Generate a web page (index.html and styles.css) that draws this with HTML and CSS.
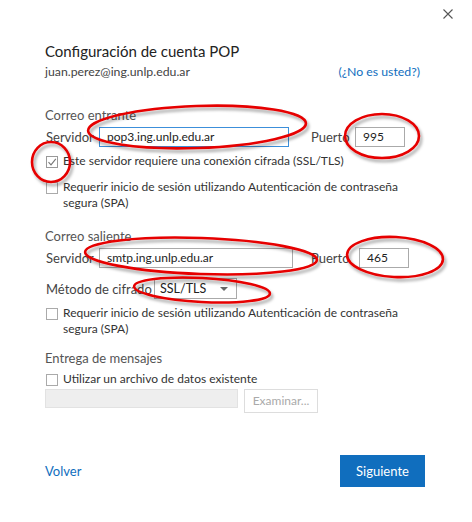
FILE: index.html
```html
<!DOCTYPE html>
<html lang="es">
<head>
<meta charset="utf-8">
<title>Configuración de cuenta POP</title>
<link rel="stylesheet" href="styles.css">
</head>
<body>
<div class="dialog">
  <div class="topbar">
    <span class="close" aria-label="Cerrar">
      <svg width="10" height="10" viewBox="0 0 10 10"><path d="M0.5 0.5 L9.5 9.5 M9.5 0.5 L0.5 9.5" stroke="#555" stroke-width="1.1" fill="none"/></svg>
    </span>
  </div>
  <div class="content">
    <h1 class="title">Configuración de cuenta POP</h1>
    <div class="account">
      <span class="email">juan.perez@ing.unlp.edu.ar</span>
      <a class="link">(¿No es usted?)</a>
    </div>

    <section class="group incoming">
      <div class="group-title">Correo entrante</div>
      <div class="field-row">
        <span class="lbl server-lbl">Servidor</span>
        <span class="input server focused">pop3.ing.unlp.edu.ar</span>
        <span class="lbl port-lbl">Puerto</span>
        <span class="input port">995</span>
      </div>
      <div class="check first">
        <span class="box checked"><svg width="10" height="10" viewBox="0 0 10 10"><path d="M1.5 5.2 L4 7.8 L8.8 1.8" stroke="#777" stroke-width="1.1" fill="none"/></svg></span>
        <span class="check-text">Este servidor requiere una conexión cifrada (SSL/TLS)</span>
      </div>
      <div class="check second">
        <span class="box"></span>
        <span class="check-text">Requerir inicio de sesión utilizando Autenticación de contraseña segura (SPA)</span>
      </div>
    </section>

    <section class="group outgoing">
      <div class="group-title">Correo saliente</div>
      <div class="field-row">
        <span class="lbl server-lbl">Servidor</span>
        <span class="input server wide">smtp.ing.unlp.edu.ar</span>
        <span class="lbl port-lbl">Puerto</span>
        <span class="input port">465</span>
      </div>
      <div class="field-row method">
        <span class="lbl method-lbl">Método de cifrado</span>
        <span class="select">SSL/TLS<svg class="caret" width="8" height="4" viewBox="0 0 8 4"><path d="M0 0 H8 L4 4 Z" fill="#666"/></svg></span>
      </div>
      <div class="check first">
        <span class="box"></span>
        <span class="check-text">Requerir inicio de sesión utilizando Autenticación de contraseña segura (SPA)</span>
      </div>
    </section>

    <section class="group delivery">
      <div class="group-title">Entrega de mensajes</div>
      <div class="check single">
        <span class="box"></span>
        <span class="check-text">Utilizar un archivo de datos existente</span>
      </div>
      <div class="file-row">
        <span class="input disabled"></span>
        <span class="btn-disabled">Examinar...</span>
      </div>
    </section>
  </div>
  <div class="footer">
    <a class="link back">Volver</a>
    <span class="primary">Siguiente</span>
  </div>

  <svg class="annotations" width="472" height="522" viewBox="0 0 472 522">
    <defs>
      <filter id="shadow" x="-20%" y="-40%" width="140%" height="180%">
        <feDropShadow dx="2" dy="3" stdDeviation="1.6" flood-color="#000" flood-opacity="0.35"/>
      </filter>
    </defs>
    <g fill="none" stroke="#e60000" stroke-width="2.6" filter="url(#shadow)">
      <ellipse cx="197" cy="127" rx="109" ry="21" transform="rotate(-2 197 127)"/>
      <ellipse cx="382" cy="136" rx="37" ry="22"/>
      <ellipse cx="51" cy="162" rx="19" ry="20"/>
      <ellipse cx="201" cy="256" rx="116" ry="18" transform="rotate(2 201 256)"/>
      <ellipse cx="395" cy="257" rx="48" ry="20" transform="rotate(3 395 257)"/>
      <ellipse cx="202" cy="290" rx="68" ry="12" transform="rotate(3 202 290)"/>
    </g>
  </svg>
</div>
</body>
</html>
```
FILE: styles.css
```css
* { box-sizing: border-box; }
html, body { margin: 0; padding: 0; background: #fff; }
body {
  font-family: Lato, "Open Sans", "Noto Sans", sans-serif;
  font-size: 13px;
  color: #333;
}
.dialog {
  position: relative;
  width: 472px;
  height: 522px;
  overflow: hidden;
  background: #fff;
}
.topbar {
  display: flex;
  justify-content: flex-end;
  padding: 9px 19px 0 0;
  height: 30px;
}
.close { display: block; width: 10px; height: 10px; }
.close svg { display: block; }

.content { padding: 0 47px 0 45px; }
.title {
  margin: 10px 0 0;
  font-size: 15px;
  font-weight: 400;
  line-height: 22px;
  color: #222;
}
.account {
  display: flex;
  justify-content: space-between;
  align-items: center;
  height: 20px;
  line-height: 20px;
  font-size: 12.3px;
}
.email { color: #444; }
.link { color: #106ebe; text-decoration: none; }
.account .link { margin-right: 5px; }

.group.incoming { margin-top: 24px; }
.group.outgoing { margin-top: 16px; }
.group.delivery { margin-top: 12px; }
.group-title { color: #555; line-height: 18px; }

.field-row {
  display: flex;
  align-items: center;
  margin-top: 3px;
  height: 20px;
}
.lbl { flex: none; color: #444; white-space: nowrap; }
.server-lbl { width: 54px; padding-left: 1px; }
.input {
  display: block;
  flex: none;
  height: 20px;
  border: 1px solid #aaa;
  padding: 0 7px;
  line-height: 18px;
  font-size: 12px;
  color: #222;
  background: #fff;
}
.input.server { width: 190px; }
.input.server.wide { width: 194px; }
.input.focused { border-color: #3c8fda; }
.port-lbl { margin-left: 22px; width: 44px; }
.outgoing .port-lbl { margin-left: 18px; width: 48px; }
.input.port { width: 50px; }

.field-row.method { margin-top: 10px; height: 21px; }
.method-lbl { width: 109px; padding-left: 1px; }
.select {
  display: flex;
  flex: none;
  align-items: center;
  justify-content: space-between;
  width: 83px;
  height: 21px;
  border: 1px solid #aaa;
  padding: 0 8px 0 5px;
  font-size: 12.5px;
  color: #222;
}
.caret { display: block; }

.check {
  display: flex;
  align-items: flex-start;
  line-height: 16px;
  font-size: 12px;
}
.check.first { margin-top: 6px; }
.check.second { margin-top: 10px; }
.check.single { margin-top: 4px; }
.box {
  flex: none;
  display: flex;
  align-items: center;
  justify-content: center;
  width: 12px;
  height: 12px;
  margin: 3px 5px 0 1px;
  border: 1px solid #aaa;
  background: #fff;
}
.box.checked { border-color: #999; }
.check-text { color: #333; }

.file-row {
  display: flex;
  align-items: flex-start;
  margin-top: 2px;
}
.input.disabled {
  width: 193px;
  height: 19px;
  background: #eee;
  border-color: #e2e2e2;
}
.btn-disabled {
  flex: none;
  margin-left: 6px;
  width: 74px;
  height: 24px;
  border: 1px solid #ddd;
  color: #aaa;
  font-size: 12px;
  text-align: center;
  line-height: 22px;
}

.footer {
  display: flex;
  justify-content: space-between;
  align-items: center;
  padding: 0 47px 0 45px;
  margin-top: 42px;
}
.primary {
  display: block;
  width: 85px;
  height: 32px;
  background: #106ebe;
  color: #fff;
  text-align: center;
  line-height: 32px;
}

.annotations {
  position: absolute;
  top: 0;
  left: 0;
  pointer-events: none;
}
```
